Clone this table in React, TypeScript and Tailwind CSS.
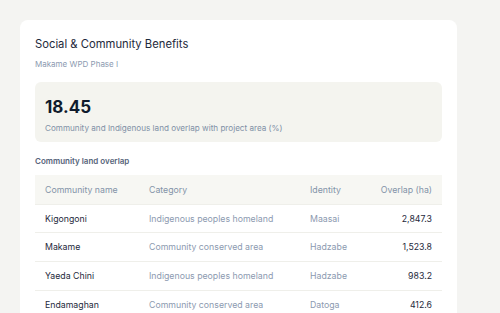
const rows = [
  { name: "Kigongoni", category: "Indigenous peoples homeland", identity: "Maasai", overlap: "2,847.3" },
  { name: "Makame", category: "Community conserved area", identity: "Hadzabe", overlap: "1,523.8" },
  { name: "Yaeda Chini", category: "Indigenous peoples homeland", identity: "Hadzabe", overlap: "983.2" },
  { name: "Endamaghan", category: "Community conserved area", identity: "Datoga", overlap: "412.6" },
];

export default function App() {
  return (
    <div className="min-h-screen bg-[#f4f4f2] pl-[20px] pt-[20px] font-['Inter',sans-serif]">
      <div className="w-[437px] rounded-[8px] bg-white px-[15px] pt-[16px] pb-6">
        <h2 className="text-[11.25px] leading-[16px] text-[#1e293b]">Social &amp; Community Benefits</h2>
        <p className="mt-[6px] text-[8px] leading-[12px] text-[#8c9ab0]">Makame WPD Phase I</p>

        <div className="mt-[12px] h-[60px] rounded-[6px] bg-[#f4f4ef] px-[10px] pt-[15px]">
          <div className="text-[17px] leading-[20px] font-bold text-[#0f1b2d]">18.45</div>
          <div className="mt-[5px] text-[8.15px] leading-[12px] text-[#8090a6]">
            Community and Indigenous land overlap with project area (%)
          </div>
        </div>

        <h3 className="mt-[13px] text-[8px] leading-[12px] font-semibold text-[#56647a]">Community land overlap</h3>

        <table className="mt-[8px] w-full border-collapse text-[8.75px]">
          <thead>
            <tr className="h-[29px] bg-[#f7f7f3] text-[#8393a8]">
              <th className="w-[114px] pl-[10px] pt-[2px] text-left font-normal">Community name</th>
              <th className="w-[161px] pt-[2px] text-left font-normal">Category</th>
              <th className="pt-[2px] text-left font-normal">Identity</th>
              <th className="pr-[10px] pt-[2px] text-right font-normal">Overlap (ha)</th>
            </tr>
          </thead>
          <tbody>
            {rows.map((r) => (
              <tr key={r.name} className="h-[28.7px] border-t border-[#efefea]">
                <td className="pl-[10px] pt-[2px] text-[#1e293b]">{r.name}</td>
                <td className="pt-[2px] text-[#8c9ab0]">{r.category}</td>
                <td className="pt-[2px] text-[#8c9ab0]">{r.identity}</td>
                <td className="pr-[10px] pt-[2px] text-right text-[#1e293b]">{r.overlap}</td>
              </tr>
            ))}
          </tbody>
        </table>
      </div>
    </div>
  );
}
